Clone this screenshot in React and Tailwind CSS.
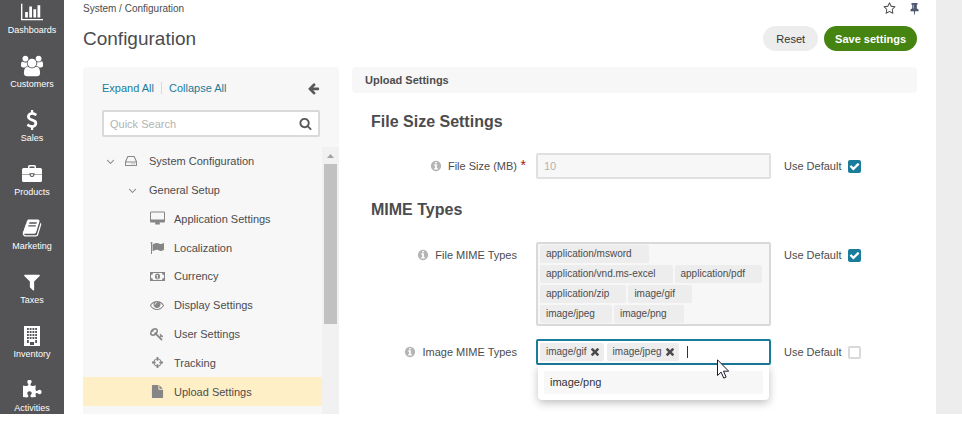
import React from 'react';

const ICONS = {
  chart: ['0 0 2048 1792', 'M640 896v512h-256v-512h256zm384-512v1024h-256v-1024h256zm1024 1152v128h-2048v-1536h128v1408h1920zm-640-896v768h-256v-768h256zm384-384v1152h-256v-1152h256z'],
  users: ['-64 0 1920 1792', 'M529 896q-162 5-265 128h-134q-82 0-138-40.5t-56-118.5q0-353 124-353 6 0 43.5 21t97.5 42.5 119 21.5q67 0 133-23-5 37-5 66 0 159 92 291zm1071 637q0 120-73 189.5t-194 69.5h-874q-121 0-194-69.5t-73-189.5q0-53 3.5-103.5t14-109 26.5-108.5 43-97.5 62-81 85.5-53.5 111.5-20q10 0 43 21.5t73 48 107 48 135 21.5 135-21.5 107-48 73-48 43-21.5q61 0 111.5 20t85.5 53.5 62 81 43 97.5 26.5 108.5 14 109 3.5 103.5zm-1024-1277q0 106-75 181t-181 75-181-75-75-181 75-181 181-75 181 75 75 181zm704 384q0 159-112.5 271.5t-271.5 112.5-271.5-112.5-112.5-271.5 112.5-271.5 271.5-112.5 271.5 112.5 112.5 271.5zm576 225q0 78-56 118.5t-138 40.5h-134q-103-123-265-128 92-132 92-291 0-29-5-66 66 23 133 23 59 0 119-21.5t97.5-42.5 43.5-21q124 0 124 353zm-128-609q0 106-75 181t-181 75-181-75-75-181 75-181 181-75 181 75 75 181z'],
  dollar: ['0 0 1792 1792', 'M1362 1185q0 153-99.5 263.5t-258.5 136.5v175q0 14-9 23t-23 9h-135q-13 0-22.5-9.5t-9.5-22.5v-175q-66-9-127.5-31t-101.5-44.5-74-48-46.5-37.5-17.5-18q-17-21-2-41l103-135q7-10 23-12 15-2 24 9l2 2q113 99 243 125 37 8 74 8 81 0 142.5-43t61.5-122q0-28-15-53t-33.5-42-58.5-37.5-66-32-80-32.5q-39-16-61.5-25t-61.5-26.5-62.5-31-56.5-35.5-53.5-42.5-43.5-49-35.5-58-21-66.5-8.5-78q0-138 98-242t255-134v-180q0-13 9.5-22.5t22.5-9.5h135q14 0 23 9t9 23v176q57 6 110.5 23t87 33.5 63.5 37.5 39 29 15 14q17 18 5 38l-81 146q-8 15-23 16-14 3-27-7-3-3-14.5-12t-39-26.5-58.5-32-74.5-26-85.5-11.5q-95 0-155 43t-60 111q0 26 8.5 48t29.5 41.5 39.5 33 56 31 60.5 27 70 27.5q53 20 81 31.5t76 35 75.5 42.5 62 50 53 63.5 31.5 76.5 13 94z'],
  briefcase: ['0 0 20 20', 'M6 4v-1.500q0-1.500 1.500-1.500h5q1.500 0 1.500 1.500v1.500h4.500q1.500 0 1.500 1.500v4.700h-7.500v-1h-5v1h-7.500v-4.700q0-1.500 1.500-1.500zM7.500 4h5v-1.500h-5zM0 10.700h7.500q.2 2.300 2.500 2.300t2.500-2.300h7.500v5.800q0 1.500-1.500 1.500h-17q-1.500 0-1.500-1.500zM8.700 10.200h2.600v.800q0 1-1.300 1t-1.300-1z'],
  book: ['0 0 1792 1792', 'M1703 478q40 57 18 129l-275 906q-19 64-76.5 107.5t-122.5 43.5h-923q-77 0-148.5-53.5t-99.5-131.5q-24-67-2-127 0-4 3-27t4-37q1-8-3-21.5t-3-19.5q2-11 8-21t16.5-23.5 16.5-23.5q23-38 45-91.5t30-91.5q3-10 .5-30t-.5-28q3-11 17-28t17-23q21-36 42-92t25-90q1-9-2.5-32t.5-28q4-13 22-30.5t22-22.5q19-26 42.5-84.5t27.5-96.5q1-8-3-25.5t-2-26.5q2-8 9-18t18-23 17-21q8-12 16.5-30.5t15-35 16-36 19.5-32 26.5-23.5 36-11.5 47.5 5.5l-1 3q38-9 51-9h761q74 0 114 56t18 130l-274 906q-36 119-71.5 153.5t-128.5 34.5h-869q-27 0-38 15-11 16-1 43 24 70 144 70h923q29 0 56-15.5t35-41.5l300-987q7-22 5-57 38 15 59 43zm-1064 2q-4 13 2 22.5t20 9.5h608q13 0 25.5-9.5t16.5-22.5l21-64q4-13-2-22.5t-20-9.5h-608q-13 0-25.5 9.5t-16.5 22.5zm-83 256q-4 13 2 22.5t20 9.5h608q13 0 25.5-9.5t16.5-22.5l21-64q4-13-2-22.5t-20-9.5h-608q-13 0-25.5 9.5t-16.5 22.5z'],
  filter: ['0 0 1792 1792', 'M1595 295q17 41-14 70l-493 493v742q0 42-39 59-13 5-25 5-27 0-45-19l-256-256q-19-19-19-45v-486l-493-493q-31-29-14-70 17-39 59-39h1280q42 0 59 39z'],
  building: ['0 0 20 20', 'M2 0h16v20h-16zM5 2h1.800v2h-1.800zM7.700 2h1.800v2h-1.800zM10.500 2h1.800v2h-1.800zM13.200 2h1.800v2h-1.800zM5 5h1.800v2h-1.800zM7.700 5h1.800v2h-1.800zM10.500 5h1.800v2h-1.800zM13.200 5h1.800v2h-1.800zM5 8h1.800v2h-1.800zM7.700 8h1.800v2h-1.800zM10.500 8h1.800v2h-1.800zM13.200 8h1.800v2h-1.800zM5 11h1.800v2h-1.800zM7.700 11h1.800v2h-1.800zM10.500 11h1.800v2h-1.800zM13.200 11h1.800v2h-1.800zM5 14h1.800v3h-1.800zM13.200 14h1.800v3h-1.800zM8 16h4v3h-4z'],
  puzzle: ['0 0 1792 1792', 'M1755 1083q0 81-44.5 135t-123.5 54q-41 0-77.5-17.5t-59-38-56.5-38-71-17.5q-110 0-110 124 0 39 16 115t15 115v5q-22 0-33 1-34 3-97.5 11.5t-115.5 13.5-98 5q-61 0-103-26.5t-42-83.5q0-37 17.5-71t38-56.5 38-59 17.5-77.5q0-79-54-123.5t-135-44.5q-84 0-143 45.5t-59 127.5q0 43 15 83t33.5 64.5 33.5 53 15 50.5q0 45-46 89-37 35-117 35-95 0-245-24-9-2-27.5-4t-27.5-4l-13-2q-1 0-3-1-2 0-2-1v-1024q2 1 17.5 3.5t34 5 21.5 3.5q150 24 245 24 80 0 117-35 46-44 46-89 0-22-15-50.5t-33.5-53-33.5-64.5-15-83q0-82 59-127.5t144-45.5q80 0 134 44.5t54 123.5q0 41-17.5 77.5t-38 59-38 56.5-17.5 71q0 57 42 83.5t103 26.5q64 0 180-15t163-17v2q-1 2-3.5 17.5t-5 34-3.5 21.5q-24 150-24 245 0 80 35 117 44 46 89 46 22 0 50.5-15t53-33.5 64.5-33.5 83-15q82 0 127.5 59t45.5 143z'],
  desktop: ['-64 0 1920 1792', 'M1728 992v-832q0-13-9.5-22.5t-22.5-9.5h-1600q-13 0-22.5 9.5t-9.5 22.5v832q0 13 9.5 22.5t22.5 9.5h1600q13 0 22.5-9.5t9.5-22.5zm128-832v1088q0 66-47 113t-113 47h-544q0 37 16 77.5t32 71 16 43.5q0 26-19 45t-45 19h-512q-26 0-45-19t-19-45q0-14 16-44t32-70 16-78h-544q-66 0-113-47t-47-113v-1088q0-66 47-113t113-47h1600q66 0 113 47t47 113z'],
  flag: ['0 0 1792 1792', 'M320 256q0 72-64 110v1266q0 13-9.5 22.5t-22.5 9.5h-64q-13 0-22.5-9.5t-9.5-22.5v-1266q-64-38-64-110 0-53 37.5-90.5t90.5-37.5 90.5 37.5 37.5 90.5zm1472 64v763q0 25-12.5 38.5t-39.5 27.5q-215 116-369 116-61 0-123.5-22t-108.5-48-115.5-48-142.5-22q-192 0-464 146-17 9-33 9-26 0-45-19t-19-45v-742q0-32 31-55 21-14 79-43 236-120 421-120 107 0 200 29t219 88q38 19 88 19 54 0 117.5-21t110-47 88-47 54.5-21q26 0 45 19t19 45z'],
  money: ['0 0 15 15', 'M0 3h15v9h-15zM3 4a2 2 0 0 1-2 2v3a2 2 0 0 1 2 2h9a2 2 0 0 1 2-2v-3a2 2 0 0 1-2-2zM7.5 4.5a2.500 3 0 0 1 0 6a2.500 3 0 0 1 0-6zM6.500 6v1h.600v2h-.600v.600h2v-.600h-.600v-3z'],
  eye: ['0 0 1792 1792', 'M1664 960q-152-236-381-353 61 104 61 225 0 185-131.5 316.5t-316.5 131.5-316.5-131.5-131.5-316.5q0-121 61-225-229 117-381 353 133 205 333.5 326.5t434.5 121.5 434.5-121.5 333.5-326.5zm-720-384q0-20-14-34t-34-14q-125 0-214.5 89.5t-89.5 214.5q0 20 14 34t34 14 34-14 14-34q0-86 61-147t147-61q20 0 34-14t14-34zm848 384q0 34-20 69-140 230-376.5 368.5t-499.5 138.5-499.5-139-376.5-368q-20-35-20-69t20-69q140-229 376.5-368t499.5-139 499.5 139 376.5 368q20 35 20 69z'],
  key: ['0 0 1792 1792', 'M832 512q0-80-56-136t-136-56-136 56-56 136q0 42 19 83-41-19-83-19-80 0-136 56t-56 136 56 136 136 56 136-56 56-136q0-42-19-83 41 19 83 19 80 0 136-56t56-136zm851 704q0 17-49 66t-66 49q-9 0-28.5-16t-36.5-33-38.5-40-24.5-26l-96 96 220 220q28 28 28 68 0 42-39 81t-81 39q-40 0-68-28l-671-671q-176 131-365 131-163 0-265.5-102.5t-102.5-265.5q0-160 95-313t248-248 313-95q163 0 265.5 102.5t102.5 265.5q0 189-131 365l355 355 96-96q-3-3-26-24.5t-40-38.5-33-36.5-16-28.5q0-17 49-66t66-49q13 0 23 10 6 6 46 44.5t82 79.5 86.5 86 73 78 28.5 41z'],
  crosshairs: ['0 0 1792 1792', 'M1325 1024h-109q-26 0-45-19t-19-45v-128q0-26 19-45t45-19h109q-32-108-112.5-188.5t-188.5-112.5v109q0 26-19 45t-45 19h-128q-26 0-45-19t-19-45v-109q-108 32-188.5 112.5t-112.5 188.5h109q26 0 45 19t19 45v128q0 26-19 45t-45 19h-109q32 108 112.5 188.5t188.5 112.5v-109q0-26 19-45t45-19h128q26 0 45 19t19 45v109q108-32 188.5-112.5t112.5-188.5zm339-192v128q0 26-19 45t-45 19h-143q-37 161-154.5 278.5t-278.5 154.5v143q0 26-19 45t-45 19h-128q-26 0-45-19t-19-45v-143q-161-37-278.5-154.5t-154.5-278.5h-143q-26 0-45-19t-19-45v-128q0-26 19-45t45-19h143q37-161 154.5-278.5t278.5-154.5v-143q0-26 19-45t45-19h128q26 0 45 19t19 45v143q161 37 278.5 154.5t154.5 278.5h143q26 0 45 19t19 45z'],
  file: ['0 0 1792 1792', 'M1152 512v-472q22 14 36 28l408 408q14 14 28 36h-472zm-128 32q0 40 28 68t68 28h544v1056q0 40-28 68t-68 28h-1344q-40 0-68-28t-28-68v-1600q0-40 28-68t68-28h800v544z'],
  drive: ['0 0 12 12', 'M2.500 1h7l2.500 5.500v4.500h-12v-4.500zM3.200 2l-2 4.500h9.600l-2-4.500zM1 7.500v2.500h10v-2.500zM6.500 8.300h1v1h-1zM8.700 8.300h1v1h-1z'],
  search: ['0 0 1792 1792', 'M1216 832q0-185-131.5-316.5t-316.5-131.5-316.5 131.5-131.5 316.5 131.5 316.5 316.5 131.5 316.5-131.5 131.5-316.5zm512 832q0 52-38 90t-90 38q-54 0-90-38l-343-342q-179 124-399 124-143 0-273.5-55.5t-225-150-150-225-55.5-273.5 55.5-273.5 150-225 225-150 273.5-55.5 273.5 55.5 225 150 150 225 55.5 273.5q0 220-124 399l343 343q37 37 37 90z'],
  back: ['0 0 1792 1792', 'M1664 896v128q0 53-32.5 90.5t-84.5 37.5h-704l293 294q38 36 38 90t-38 90l-75 76q-37 37-90 37-52 0-91-37l-651-652q-37-37-37-90 0-52 37-91l651-650q38-38 91-38 52 0 90 38l75 74q38 38 38 91t-38 91l-293 293h704q52 0 84.5 37.5t32.5 90.5z'],
  info: ['0 0 1792 1792', 'M1152 1376v-160q0-14-9-23t-23-9h-96v-512q0-14-9-23t-23-9h-320q-14 0-23 9t-9 23v160q0 14 9 23t23 9h96v320h-96q-14 0-23 9t-9 23v160q0 14 9 23t23 9h448q14 0 23-9t9-23zm-128-896v-160q0-14-9-23t-23-9h-192q-14 0-23 9t-9 23v160q0 14 9 23t23 9h192q14 0 23-9t9-23zm640 416q0 209-103 385.5t-279.5 279.5-385.5 103-385.5-103-279.5-279.5-103-385.5 103-385.5 279.5-279.5 385.5-103 385.5 103 279.5 279.5 103 385.5z'],
  times: ['302 366 1188 1188', 'M1490 1322q0 40-28 68l-136 136q-28 28-68 28t-68-28l-294-294-294 294q-28 28-68 28t-68-28l-136-136q-28-28-28-68t28-68l294-294-294-294q-28-28-28-68t28-68l136-136q28-28 68-28t68 28l294 294 294-294q28-28 68-28t68 28l136 136q28 28 28 68t-28 68l-294 294 294 294q28 28 28 68z'],
  check: ['0 0 1792 1792', 'M1671 566q0 40-28 68l-724 724-136 136q-28 28-68 28t-68-28l-136-136-362-362q-28-28-28-68t28-68l136-136q28-28 68-28t68 28l294 295 656-657q28-28 68-28t68 28l136 136q28 28 28 68z'],
  angle: ['0 0 1792 1792', 'M1395 736q0 13-10 23l-466 466q-10 10-23 10t-23-10l-466-466q-10-10-10-23t10-23l50-50q10-10 23-10t23 10l393 393 393-393q10-10 23-10t23 10l50 50q10 10 10 23z'],
  star: ['0 0 1792 1792', 'M1201 1004l306-297-422-62-189-382-189 382-422 62 306 297-73 421 378-199 377 199zm527-357q0 22-26 48l-363 354 86 500q1 7 1 20 0 50-41 50-19 0-40-12l-449-236-449 236q-22 12-40 12-21 0-31.5-14.5t-10.5-35.5q0-6 2-20l86-500-364-354q-25-27-25-48 0-37 56-46l502-73 225-455q19-41 49-41t49 41l225 455 502 73q56 9 56 46z'],
  pin: ['0 0 1792 1792', 'M800 864v-448q0-14-9-23t-23-9-23 9-9 23v448q0 14 9 23t23 9 23-9 9-23zm672 352q0 26-19 45t-45 19h-429l-51 483q-2 12-10.5 20.5t-20.5 8.5h-1q-27 0-32-27l-76-485h-404q-26 0-45-19t-19-45q0-123 78.5-221.5t177.5-98.5v-512q-52 0-90-38t-38-90 38-90 90-38h640q52 0 90 38t38 90-38 90-90 38v512q99 0 177.5 98.5t78.5 221.5z'],
};

const EVEN_ODD = ['briefcase', 'building', 'money', 'drive'];

function Icon({ name, className }) {
  const [viewBox, d] = ICONS[name];
  return (
    <svg viewBox={viewBox} className={`shrink-0 ${className}`} fill="currentColor" aria-hidden="true">
      <path d={d} fillRule={EVEN_ODD.includes(name) ? 'evenodd' : 'nonzero'} />
    </svg>
  );
}

const NAV = [
  ['Dashboards', 'chart', 'size-[22px]'],
  ['Customers', 'users', 'size-[22px]'],
  ['Sales', 'dollar', 'size-5'],
  ['Products', 'briefcase', 'size-5'],
  ['Marketing', 'book', 'size-5'],
  ['Taxes', 'filter', 'size-5'],
  ['Inventory', 'building', 'size-5'],
  ['Activities', 'puzzle', 'size-5'],
];

const TREE = [
  ['Application Settings', 'desktop', 'size-[15px]'],
  ['Localization', 'flag', 'size-[14px]'],
  ['Currency', 'money', 'size-[15px]'],
  ['Display Settings', 'eye', 'size-[14px]'],
  ['User Settings', 'key', 'size-[14px]'],
  ['Tracking', 'crosshairs', 'size-[13px]'],
  ['Upload Settings', 'file', 'size-[13px]'],
];

const FILE_TYPES = [
  'application/msword',
  'application/vnd.ms-excel',
  'application/pdf',
  'application/zip',
  'image/gif',
  'image/jpeg',
  'image/png',
];

function Sidebar() {
  return (
    <nav className="w-16 shrink-0 bg-[#545456] text-white">
      <ul className="flex flex-col gap-[19px] pt-px">
        {NAV.map(([label, icon, size]) => (
          <li key={label}>
            <a href="#" className="flex flex-col items-center gap-px text-[9px] leading-3">
              <span className="flex h-[22px] items-center">
                <Icon name={icon} className={size} />
              </span>
              {label}
            </a>
          </li>
        ))}
      </ul>
    </nav>
  );
}

function TreePanel() {
  return (
    <aside className="flex w-64 shrink-0 flex-col rounded-t bg-[#f7f7f7]">
      <div className="mb-px flex h-[42px] items-center px-[19px] text-[#1a7c9b]">
        <button type="button">Expand All</button>
        <span className="mx-[7px] h-3 w-px bg-[#d9d9d9]" />
        <button type="button">Collapse All</button>
        <button type="button" aria-label="Hide panel" className="ml-auto text-[#58585a]">
          <Icon name="back" className="size-[13px]" />
        </button>
      </div>
      <div className="mx-[19px] mb-[10px] flex h-[27px] items-center rounded-xs border-2 border-[#d9d9d9] bg-white px-[6px]">
        <input
          type="text"
          aria-label="Quick Search"
          placeholder="Quick Search"
          className="min-w-0 flex-1 bg-transparent outline-none placeholder:text-[#b3b3b3]"
        />
        <button type="button" aria-label="Search" className="text-[#58585a]">
          <Icon name="search" className="size-[13px]" />
        </button>
      </div>
      <div className="flex flex-1">
        <ul className="grid h-[259px] flex-1 grid-rows-9">
          <li className="flex items-center pl-[21px]">
            <Icon name="angle" className="size-[13px] text-[#8a8a8a]" />
            <Icon name="drive" className="ml-2 size-[12px] text-[#8a8a8a]" />
            <a href="#" className="ml-[12px]">System Configuration</a>
          </li>
          <li className="flex items-center pl-[43px]">
            <Icon name="angle" className="size-[13px] text-[#8a8a8a]" />
            <a href="#" className="ml-[10px]">General Setup</a>
          </li>
          {TREE.map(([label, icon, size], i) => (
            <li key={label} className={i === 6 ? 'bg-[#ffefc6]' : ''}>
              <a href="#" className="flex h-full items-center gap-[9px] pl-[66px]">
                <span className="flex w-4 justify-center text-[#868686]">
                  <Icon name={icon} className={size} />
                </span>
                {label}
              </a>
            </li>
          ))}
        </ul>
        <div className="flex w-[17px] flex-col items-center bg-[#f1f1f1]">
          <span className="flex h-[17px] items-center">
            <svg viewBox="0 0 7 4" className="h-1 w-[7px]" fill="#a3a3a3" aria-hidden="true">
              <path d="M0 4L3.500 0L7 4z" />
            </svg>
          </span>
          <span className="h-40 w-[13px] bg-[#c1c1c1]" />
        </div>
      </div>
    </aside>
  );
}

function UseDefault({ id, checked }) {
  return (
    <div className="flex h-[26px] items-center gap-[7px]">
      <label htmlFor={id}>Use Default</label>
      <span className="relative flex">
        <input
          id={id}
          type="checkbox"
          defaultChecked={checked}
          className="peer size-[13px] appearance-none rounded-xs border-2 border-[#d9d9d9] bg-white checked:border-[#1a7c9b] checked:bg-[#1a7c9b]"
        />
        <Icon
          name="check"
          className="pointer-events-none invisible absolute inset-px size-[11px] text-white peer-checked:visible"
        />
      </span>
    </div>
  );
}

function Field({ id, label, required, checked, className, children }) {
  return (
    <div className={`flex items-start ${className}`}>
      <div className="flex h-[26px] w-[155px] shrink-0 items-center justify-end">
        <Icon name="info" className="mr-[6px] size-[12px] text-[#b5b5b5]" />
        <label htmlFor={id}>{label}</label>
        <span className="w-[9px] self-start text-right text-[14px] leading-[24px] text-[#a5180c]">
          {required ? '*' : ''}
        </span>
      </div>
      <div className="ml-[10px] mr-[13px] min-w-0 max-w-[235px] flex-1">{children}</div>
      <UseDefault id={`${id}-default`} checked={checked} />
    </div>
  );
}

function SettingsForm() {
  return (
    <form className="min-w-0 flex-1">
      <h2 className="h-[26px] rounded bg-[#f7f7f7] px-[13px] font-bold leading-[26px]">Upload Settings</h2>
      <div className="pl-[19px]">
        <h3 className="mt-[19px] text-base font-bold leading-5">File Size Settings</h3>
        <Field id="file-size" label="File Size (MB)" required checked className="mt-[21px]">
          <input
            id="file-size"
            type="text"
            defaultValue="10"
            disabled
            className="h-[26px] w-full rounded-xs border-2 border-[#e0e0e0] bg-[#f7f7f7] px-[6px] text-[#b3b3b3]"
          />
        </Field>
        <h3 className="mt-[21px] text-base font-bold leading-5">MIME Types</h3>
        <Field id="file-mime" label="File MIME Types" checked className="mt-[22px]">
          <ul
            id="file-mime"
            className="flex flex-wrap gap-[2px] rounded-xs border-2 border-[#d9d9d9] bg-[#f7f7f7] py-px pl-[2px] pr-[5px] text-[10px] leading-[18px]"
          >
            {FILE_TYPES.map((type) => (
              <li key={type} className="rounded-xs bg-[#ededed] pl-[6px] pr-[17px]">{type}</li>
            ))}
          </ul>
        </Field>
        <Field id="image-mime" label="Image MIME Types" className="mt-[13px]">
          <div className="relative">
            <div className="flex gap-[3px] rounded-xs border-2 border-[#1a7c9b] bg-white p-[2px] text-[10px] leading-[18px]">
              {['image/gif', 'image/jpeg'].map((type) => (
                <span key={type} className="flex items-center gap-[4px] rounded-xs bg-[#ededed] pl-[6px] pr-[5px]">
                  {type}
                  <button type="button" aria-label={`Remove ${type}`}>
                    <Icon name="times" className="size-[8px]" />
                  </button>
                </span>
              ))}
              <span className="ml-[5px] h-3 w-px shrink-0 self-center bg-[#333333]" />
              <input id="image-mime" type="text" className="h-[18px] w-0 min-w-0 flex-1 outline-none" />
            </div>
            <ul className="absolute inset-x-[2px] top-full rounded-b bg-white p-[6px] shadow-[0_3px_8px_rgba(0,0,0,0.25)]">
              <li className="h-[23px] bg-[#f7f7f7] px-[6px] leading-[23px] text-[#333333]">image/png</li>
            </ul>
            <svg viewBox="0 0 13 20" className="absolute left-[181px] top-[20px] h-5 w-[13px]" aria-hidden="true">
              <path
                d="M.5 .8v15.700l3.600-3.400 2.600 6 2.400-1-2.600-5.900h5.200z"
                fill="#ffffff"
                stroke="#1a1a2e"
              />
            </svg>
          </div>
        </Field>
      </div>
    </form>
  );
}

export default function App() {
  return (
    <div className="flex bg-white font-['Liberation_Sans',Arial,sans-serif] text-[11px] leading-[14px] text-[#4c4c4e]">
      <Sidebar />
      <main className="flex min-w-0 flex-1 flex-col px-[19px]">
        <div className="flex h-[17px] items-center text-[10px]">
          <span>System / Configuration</span>
          <button type="button" aria-label="Add to favorites" className="ml-auto">
            <Icon name="star" className="size-[13px]" />
          </button>
          <button type="button" aria-label="Pin page" className="-mr-1 ml-3 text-[#4f5a70]">
            <Icon name="pin" className="size-[13px]" />
          </button>
        </div>
        <header className="mb-[7px] flex h-[43px] items-center gap-[6px]">
          <h1 className="mr-auto text-[19px] leading-6">Configuration</h1>
          <button type="button" className="h-[25px] rounded-full bg-[#ededed] px-[13px] text-[#333333]">
            Reset
          </button>
          <button type="button" className="h-[25px] rounded-full bg-[#468412] px-[11px] font-bold text-white">
            Save settings
          </button>
        </header>
        <div className="flex flex-1 gap-[13px]">
          <TreePanel />
          <SettingsForm />
        </div>
      </main>
      <div className="w-[26px] shrink-0 bg-[#ededed]" />
    </div>
  );
}
